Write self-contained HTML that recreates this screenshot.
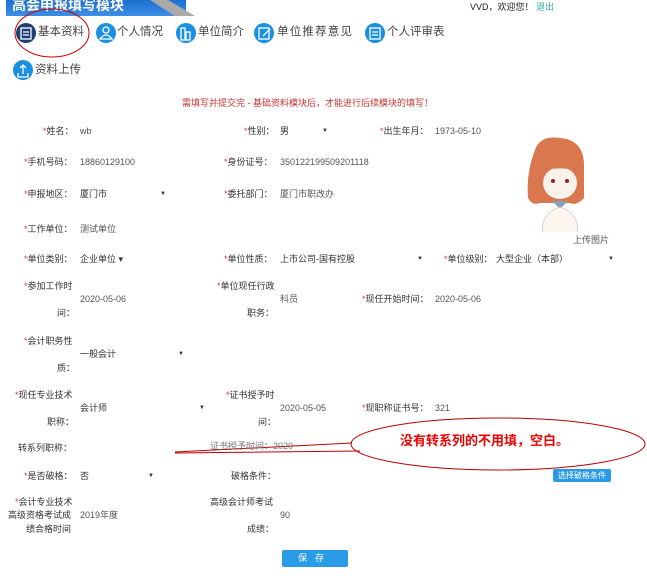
<!DOCTYPE html>
<html><head><meta charset="utf-8"><style>
*{margin:0;padding:0;box-sizing:border-box}
body{width:647px;height:579px;background:#fff;position:relative;overflow:hidden;font-family:"Liberation Sans","Noto Sans CJK SC",sans-serif;color:#333}
.a{position:absolute;white-space:nowrap;font-size:9px;line-height:11px}
.s{color:#e33}
.v{color:#555}
.tab{position:absolute;font-size:11.5px;color:#444;line-height:20px;white-space:nowrap}
.ic{position:absolute;width:20px;height:20px;border-radius:50%;background:#1a90e0}
.arr{position:absolute;font-size:6px;color:#333}
</style></head><body>
<div style="position:absolute;left:6px;top:0;width:180px;height:16px;background:linear-gradient(#1e6fd0,#3b8fe6)"></div>
<div style="position:absolute;left:150px;top:0;width:45px;height:16px;background:#aaa;clip-path:polygon(0 0,40% 0,100% 100%,55% 100%)"></div>
<div class="a" style="left:12px;top:-2px;font-size:14px;line-height:14px;color:#fff;font-weight:bold">高会申报填写模块</div>
<div class="a" style="left:470px;top:2px;color:#222">VVD，欢迎您！ <span style="color:#3a9">退出</span></div>

<div class="ic" style="left:16px;top:23px;background:#1d3f74"></div>
<div class="tab" style="left:38px;top:22px">基本资料</div>
<div class="ic" style="left:96px;top:23px"></div>
<div class="tab" style="left:117px;top:22px">个人情况</div>
<div class="ic" style="left:176px;top:23px"></div>
<div class="tab" style="left:198px;top:22px">单位简介</div>
<div class="ic" style="left:254px;top:23px"></div>
<div class="tab" style="left:277px;top:22px;letter-spacing:1.2px">单位推荐意见</div>
<div class="ic" style="left:365px;top:23px"></div>
<div class="tab" style="left:387px;top:22px">个人评审表</div>
<div class="ic" style="left:13px;top:60px"></div>
<div class="tab" style="left:35px;top:60px">资料上传</div>
<svg style="position:absolute;left:0;top:0" width="647" height="579">
<g stroke="#fff" stroke-width="1.3" fill="none">
<rect x="21" y="28" width="10" height="11"/><path d="M23 32h6M23 35h6"/>
<circle cx="106" cy="30" r="3"/><path d="M100 39q6-8 12 0z"/>
<rect x="181" y="28" width="4" height="12"/><rect x="186" y="32" width="4" height="8"/>
<rect x="259" y="28" width="10" height="11"/><path d="M263 36l7-7"/>
<rect x="370" y="28" width="10" height="11"/><path d="M372 32h6M372 35h6"/>
<path d="M18 73v4h10v-4M23 74v-9M20 68l3-3 3 3"/>
</g>
<ellipse cx="52" cy="33" rx="37" ry="24" fill="none" stroke="#c00" stroke-width="1"/>
<ellipse cx="498" cy="444" rx="147" ry="26" fill="none" stroke="#b00" stroke-width="1"/>
<path d="M175 452L352 443M175 453L360 451" stroke="#b00" stroke-width="1" fill="none"/>
<g>
<path d="M535 150q5-15 25-12q25 2 24 30q0 20 0 30q-7 8-14 5l-30 0q-8 3-12-5q-2-25 7-48z" fill="#d9774f"/>
<ellipse cx="560" cy="183" rx="17" ry="16" fill="#fdf2ea"/>
<path d="M543 170q10-10 25-8q6 2 10 10q-10-6-35-2z" fill="#d9774f"/>
<circle cx="553" cy="181" r="2" fill="#922"/><circle cx="567" cy="181" r="2" fill="#922"/>
<path d="M552 201l8 8 8-8z" fill="#8aa2b5"/>
<path d="M542 232q0-20 18-25q18 5 18 25" fill="#fbf6ee" stroke="#c9b" stroke-width=".5"/>
</g>
</svg>
<div class="a" style="left:400px;top:433px;font-size:13px;line-height:15px;color:#e00;font-weight:bold">没有转系列的不用填，空白。</div>
<div class="a" style="left:182px;top:98px;color:#c33">需填写并提交完 - 基础资料模块后，才能进行后续模块的填写！</div>

<div class="a" style="left:43px;top:126px"><span class="s">*</span>姓名：</div><div class="a v" style="left:80px;top:126px">wb</div>
<div class="a" style="left:244px;top:126px"><span class="s">*</span>性别：</div><div class="a" style="left:280px;top:126px">男</div><div class="arr" style="left:322px;top:128px">▼</div>
<div class="a" style="left:380px;top:126px"><span class="s">*</span>出生年月：</div><div class="a v" style="left:435px;top:126px">1973-05-10</div>

<div class="a" style="left:24px;top:157px"><span class="s">*</span>手机号码：</div><div class="a v" style="left:80px;top:157px">18860129100</div>
<div class="a" style="left:224px;top:157px"><span class="s">*</span>身份证号：</div><div class="a v" style="left:280px;top:157px">350122199509201118</div>

<div class="a" style="left:24px;top:189px"><span class="s">*</span>申报地区：</div><div class="a" style="left:80px;top:189px">厦门市</div><div class="arr" style="left:160px;top:191px">▼</div>
<div class="a" style="left:224px;top:189px"><span class="s">*</span>委托部门：</div><div class="a v" style="left:280px;top:189px">厦门市职改办</div>

<div class="a" style="left:24px;top:224px"><span class="s">*</span>工作单位：</div><div class="a v" style="left:80px;top:224px">测试单位</div>
<div class="a v" style="left:573px;top:235px">上传图片</div>

<div class="a" style="left:24px;top:254px"><span class="s">*</span>单位类别：</div><div class="a" style="left:80px;top:254px">企业单位 ▾</div>
<div class="a" style="left:224px;top:254px"><span class="s">*</span>单位性质：</div><div class="a" style="left:280px;top:254px">上市公司-国有控股</div><div class="arr" style="left:417px;top:256px">▼</div>
<div class="a" style="left:444px;top:254px"><span class="s">*</span>单位级别：</div><div class="a" style="left:496px;top:254px">大型企业（本部）</div><div class="arr" style="left:608px;top:256px">▼</div>

<div class="a" style="left:24px;top:281px"><span class="s">*</span>参加工作时</div><div class="a v" style="left:80px;top:294px">2020-05-06</div><div class="a" style="left:57px;top:308px">间：</div>
<div class="a" style="left:217px;top:281px"><span class="s">*</span>单位现任行政</div><div class="a v" style="left:280px;top:294px">科员</div><div class="a" style="left:247px;top:308px">职务：</div>
<div class="a" style="left:362px;top:294px"><span class="s">*</span>现任开始时间：</div><div class="a v" style="left:435px;top:294px">2020-05-06</div>

<div class="a" style="left:24px;top:336px"><span class="s">*</span>会计职务性</div><div class="a" style="left:80px;top:349px">一般会计</div><div class="arr" style="left:178px;top:351px">▼</div><div class="a" style="left:57px;top:363px">质：</div>

<div class="a" style="left:15px;top:390px"><span class="s">*</span>现任专业技术</div><div class="a" style="left:80px;top:403px">会计师</div><div class="arr" style="left:199px;top:405px">▼</div><div class="a" style="left:47px;top:417px">职称：</div>
<div class="a" style="left:226px;top:390px"><span class="s">*</span>证书授予时</div><div class="a v" style="left:280px;top:403px">2020-05-05</div><div class="a" style="left:258px;top:417px">间：</div>
<div class="a" style="left:362px;top:403px"><span class="s">*</span>现职称证书号：</div><div class="a v" style="left:435px;top:403px">321</div>

<div class="a" style="left:18px;top:443px">转系列职称：</div>
<div class="a" style="left:210px;top:441px;color:#777">证书授予时间：2020</div>

<div class="a" style="left:24px;top:471px"><span class="s">*</span>是否破格：</div><div class="a" style="left:80px;top:471px">否</div><div class="arr" style="left:148px;top:473px">▼</div>
<div class="a" style="left:231px;top:471px">破格条件：</div>
<div class="a" style="left:553px;top:469px;width:58px;height:13px;background:#2a9be6;color:#fff;border-radius:2px;font-size:8px;line-height:13px;text-align:center">选择破格条件</div>

<div class="a" style="left:15px;top:497px"><span class="s">*</span>会计专业技术</div><div class="a" style="left:8px;top:510px">高级资格考试成</div><div class="a" style="left:26px;top:524px">绩合格时间</div>
<div class="a v" style="left:80px;top:510px">2019年度</div>
<div class="a" style="left:210px;top:497px">高级会计师考试</div><div class="a v" style="left:280px;top:510px">90</div><div class="a" style="left:247px;top:524px">成绩：</div>

<div class="a" style="left:282px;top:550px;width:66px;height:17px;background:#2a9be6;color:#fff;border-radius:2px;line-height:17px;text-align:center;letter-spacing:8px">保存</div>
</body></html>
